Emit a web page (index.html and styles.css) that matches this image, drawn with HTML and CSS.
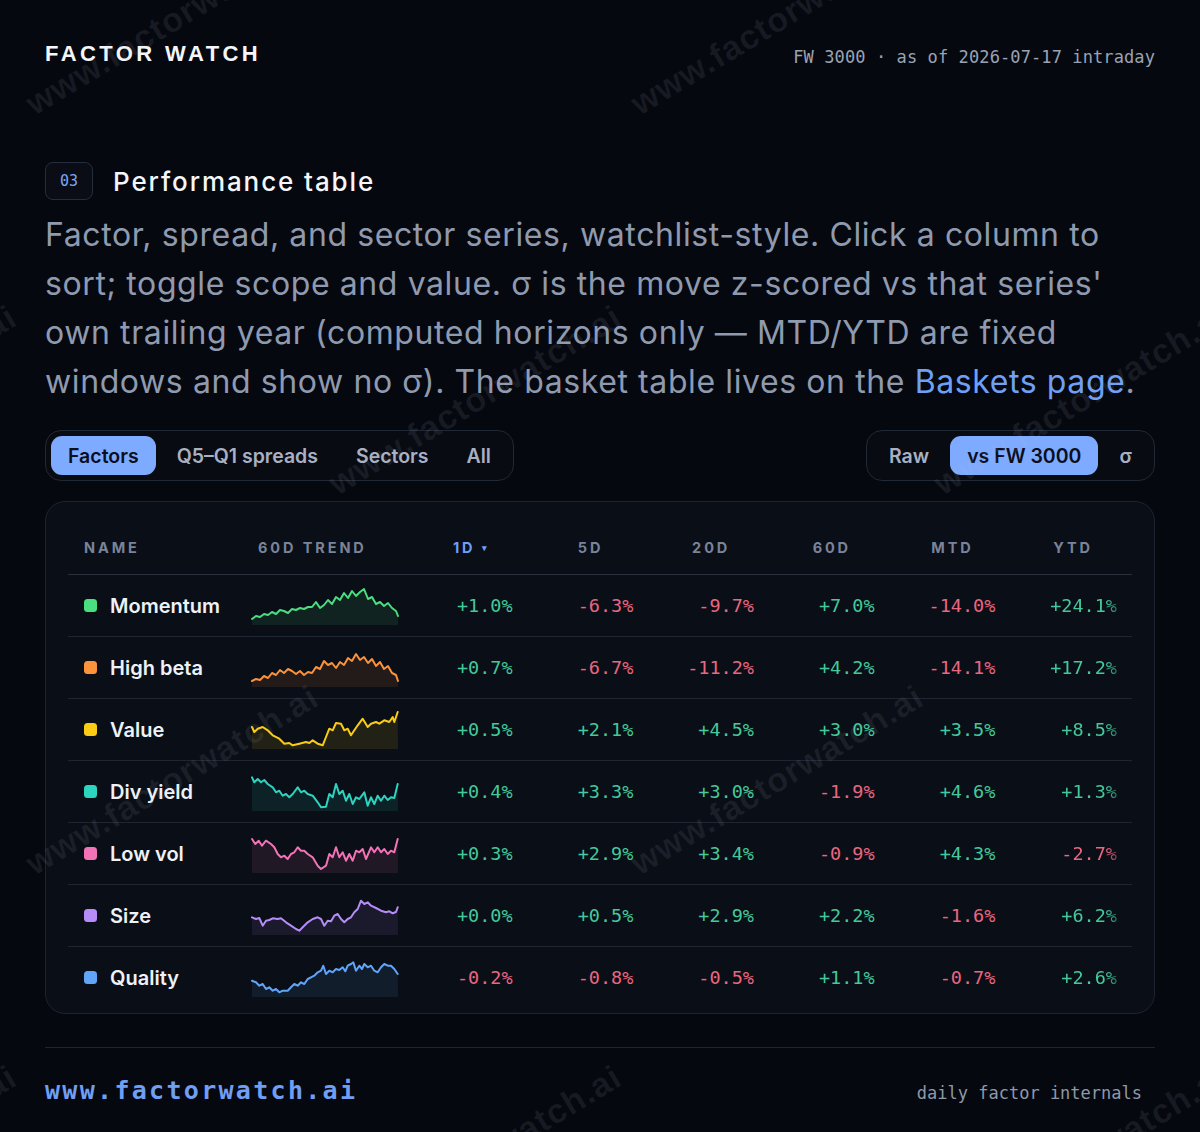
FILE: index.html
```html
<!DOCTYPE html>
<html lang="en">
<head>
<meta charset="utf-8">
<title>Factor Watch — Performance table</title>
<link rel="stylesheet" href="styles.css">
</head>
<body>
<div class="page">
  <header class="topbar">
    <div class="brand">FACTOR WATCH</div>
    <div class="asof">FW 3000 · as of 2026-07-17 intraday</div>
  </header>

  <section class="section">
    <div class="section-head">
      <span class="badge">03</span>
      <h2 class="title">Performance table</h2>
    </div>
    <p class="lede">Factor, spread, and sector series, watchlist-style. Click a column to sort; toggle scope and value. σ is the move z-scored vs that series' own trailing year (computed horizons only — MTD/YTD are fixed windows and show no σ). The basket table lives on the <a class="link" href="#">Baskets page</a>.</p>

    <div class="controls">
      <div class="seg">
        <button class="tab active">Factors</button>
        <button class="tab">Q5–Q1 spreads</button>
        <button class="tab">Sectors</button>
        <button class="tab">All</button>
      </div>
      <div class="seg">
        <button class="tab">Raw</button>
        <button class="tab active">vs FW 3000</button>
        <button class="tab">σ</button>
      </div>
    </div>

    <div class="card">
      <div class="row head">
        <div class="th th-name">NAME</div>
        <div class="th th-name">60D TREND</div>
        <div class="th num sorted">1D <span class="caret">▾</span></div>
        <div class="th num">5D</div>
        <div class="th num">20D</div>
        <div class="th num">60D</div>
        <div class="th num">MTD</div>
        <div class="th num">YTD</div>
      </div>

      <div class="row">
        <div class="name"><span class="dot c-mom"></span>Momentum</div>
        <div class="trend">
          <svg class="spark c-mom" viewBox="0 0 146 38" width="146" height="38">
            <polygon class="area" points="0,32 4,29 8,30 12,27 16,28 20,25 24,27 28,23 32,24 36,26 40,22 44,23 48,21 52,22 56,20 60,20 64,15 68,21 72,18 76,13 80,17 84,10 88,13 92,6 96,11 100,4 104,9 108,5 112,2 116,12 120,10 124,17 128,15 132,19 136,16 140,21 144,24 146,29 146,38 0,38"/>
            <polyline class="line" points="0,32 4,29 8,30 12,27 16,28 20,25 24,27 28,23 32,24 36,26 40,22 44,23 48,21 52,22 56,20 60,20 64,15 68,21 72,18 76,13 80,17 84,10 88,13 92,6 96,11 100,4 104,9 108,5 112,2 116,12 120,10 124,17 128,15 132,19 136,16 140,21 144,24 146,29"/>
          </svg>
        </div>
        <div class="val up">+1.0%</div>
        <div class="val dn">-6.3%</div>
        <div class="val dn">-9.7%</div>
        <div class="val up">+7.0%</div>
        <div class="val dn">-14.0%</div>
        <div class="val up fade">+24.1%</div>
      </div>

      <div class="row">
        <div class="name"><span class="dot c-beta"></span>High beta</div>
        <div class="trend">
          <svg class="spark c-beta" viewBox="0 0 146 38" width="146" height="38">
            <polygon class="area" points="0,32 4,30 8,31 12,27 16,29 20,24 24,26 28,21 32,24 36,20 40,22 44,25 48,22 52,26 56,23 60,24 64,18 68,20 72,12 76,16 80,14 84,19 88,13 92,16 96,9 100,12 104,5 108,11 112,8 116,14 120,10 124,17 128,13 132,20 136,17 140,24 144,26 146,32 146,38 0,38"/>
            <polyline class="line" points="0,32 4,30 8,31 12,27 16,29 20,24 24,26 28,21 32,24 36,20 40,22 44,25 48,22 52,26 56,23 60,24 64,18 68,20 72,12 76,16 80,14 84,19 88,13 92,16 96,9 100,12 104,5 108,11 112,8 116,14 120,10 124,17 128,13 132,20 136,17 140,24 144,26 146,32"/>
          </svg>
        </div>
        <div class="val up">+0.7%</div>
        <div class="val dn">-6.7%</div>
        <div class="val dn">-11.2%</div>
        <div class="val up">+4.2%</div>
        <div class="val dn">-14.1%</div>
        <div class="val up fade">+17.2%</div>
      </div>

      <div class="row">
        <div class="name"><span class="dot c-val"></span>Value</div>
        <div class="trend">
          <svg class="spark c-val" viewBox="0 0 146 38" width="146" height="38">
            <polygon class="area" points="0,16 2.3,21 5.7,17.7 10.7,16 15.7,19.3 20.7,24.3 27.3,27.7 32.3,32.7 37.3,32 40.7,34.3 47.3,32.7 54,31 57.3,32 60.7,29.3 65.7,32.7 70.7,34.3 74,26 77.3,17.7 80.7,19.3 84,12 89,12.7 92.3,19.3 95.7,17.7 99,24.3 102.3,19.3 105.7,14.3 110.7,7.7 115.7,16 119,12.7 124,11 127.3,12.7 132.3,9.3 137.3,11 140.7,6 142.3,11 145.7,1 146,38 0,38"/>
            <polyline class="line" points="0,16 2.3,21 5.7,17.7 10.7,16 15.7,19.3 20.7,24.3 27.3,27.7 32.3,32.7 37.3,32 40.7,34.3 47.3,32.7 54,31 57.3,32 60.7,29.3 65.7,32.7 70.7,34.3 74,26 77.3,17.7 80.7,19.3 84,12 89,12.7 92.3,19.3 95.7,17.7 99,24.3 102.3,19.3 105.7,14.3 110.7,7.7 115.7,16 119,12.7 124,11 127.3,12.7 132.3,9.3 137.3,11 140.7,6 142.3,11 145.7,1"/>
          </svg>
        </div>
        <div class="val up">+0.5%</div>
        <div class="val up">+2.1%</div>
        <div class="val up">+4.5%</div>
        <div class="val up">+3.0%</div>
        <div class="val up">+3.5%</div>
        <div class="val up fade">+8.5%</div>
      </div>

      <div class="row">
        <div class="name"><span class="dot c-div"></span>Div yield</div>
        <div class="trend">
          <svg class="spark c-div" viewBox="0 0 146 38" width="146" height="38">
            <polygon class="area" points="0,4.3 2.3,9.3 5.7,6 9,9.3 12.3,7 15.7,11 20.7,14.3 24,19.3 27.3,17.7 30.7,22.7 34,21 37.3,24.3 40.7,21 45.7,14.3 49,19.3 52.3,17.7 55.7,21 60.7,22.7 65.7,29.3 69,34.3 74,33.7 77.3,21 80.7,24.3 84,11 87.3,21 90.7,17.7 94,27.7 97.3,21 100.7,31 104,24.3 107.3,26 112.3,19.3 115.7,32.7 119,24.3 122.3,31 125.7,22.7 129,27.7 132.3,22.7 135.7,27 139,24.3 142.3,25 145.7,11 146,38 0,38"/>
            <polyline class="line" points="0,4.3 2.3,9.3 5.7,6 9,9.3 12.3,7 15.7,11 20.7,14.3 24,19.3 27.3,17.7 30.7,22.7 34,21 37.3,24.3 40.7,21 45.7,14.3 49,19.3 52.3,17.7 55.7,21 60.7,22.7 65.7,29.3 69,34.3 74,33.7 77.3,21 80.7,24.3 84,11 87.3,21 90.7,17.7 94,27.7 97.3,21 100.7,31 104,24.3 107.3,26 112.3,19.3 115.7,32.7 119,24.3 122.3,31 125.7,22.7 129,27.7 132.3,22.7 135.7,27 139,24.3 142.3,25 145.7,11"/>
          </svg>
        </div>
        <div class="val up">+0.4%</div>
        <div class="val up">+3.3%</div>
        <div class="val up">+3.0%</div>
        <div class="val dn">-1.9%</div>
        <div class="val up">+4.6%</div>
        <div class="val up fade">+1.3%</div>
      </div>

      <div class="row">
        <div class="name"><span class="dot c-low"></span>Low vol</div>
        <div class="trend">
          <svg class="spark c-low" viewBox="0 0 146 38" width="146" height="38">
            <polygon class="area" points="0,4 3.3,9 6.7,5.7 10,10.7 14,5.7 19,9 22.3,12.3 25.7,19 29,22.3 32.3,20.7 35.7,24 39,19 42.3,17.3 45.7,12.3 49,15.7 52.3,15.7 55.7,19 60.7,22.3 65.7,30.7 69,34 74,30.7 77.3,19 80.7,22.3 84,12.3 87.3,22.3 90.7,17.3 94,25.7 97.3,19 100.7,25.7 104,15.7 107.3,17.3 110.7,14 114,24 119,12.3 122.3,17.3 125.7,12.3 129,17.3 132.3,14 135.7,19 139,15.7 142.3,17.3 145.7,4 146,38 0,38"/>
            <polyline class="line" points="0,4 3.3,9 6.7,5.7 10,10.7 14,5.7 19,9 22.3,12.3 25.7,19 29,22.3 32.3,20.7 35.7,24 39,19 42.3,17.3 45.7,12.3 49,15.7 52.3,15.7 55.7,19 60.7,22.3 65.7,30.7 69,34 74,30.7 77.3,19 80.7,22.3 84,12.3 87.3,22.3 90.7,17.3 94,25.7 97.3,19 100.7,25.7 104,15.7 107.3,17.3 110.7,14 114,24 119,12.3 122.3,17.3 125.7,12.3 129,17.3 132.3,14 135.7,19 139,15.7 142.3,17.3 145.7,4"/>
          </svg>
        </div>
        <div class="val up">+0.3%</div>
        <div class="val up">+2.9%</div>
        <div class="val up">+3.4%</div>
        <div class="val dn">-0.9%</div>
        <div class="val up">+4.3%</div>
        <div class="val dn fade">-2.7%</div>
      </div>

      <div class="row">
        <div class="name"><span class="dot c-size"></span>Size</div>
        <div class="trend">
          <svg class="spark c-size" viewBox="0 0 146 38" width="146" height="38">
            <polygon class="area" points="0,20.3 4,22 7.3,21 10.7,28.7 14,23.7 17.3,23 20.7,21.3 25.7,22 29,21.3 34,25.3 39,28.7 44,32 47.3,33.7 50.7,30.3 55.7,25.3 60.7,22 65.7,20.3 69,22 72.3,28.7 75.7,23.7 79,24.3 82.3,18.7 85.7,17 89,22 92.3,25.3 95.7,22 99,20.3 102.3,15.3 105.7,12 109,3.7 112.3,7 115.7,5.3 119,8.7 124,11 129,13.7 134,15.3 137.3,14.3 140.7,16.3 144,15 145.7,10.3 146,38 0,38"/>
            <polyline class="line" points="0,20.3 4,22 7.3,21 10.7,28.7 14,23.7 17.3,23 20.7,21.3 25.7,22 29,21.3 34,25.3 39,28.7 44,32 47.3,33.7 50.7,30.3 55.7,25.3 60.7,22 65.7,20.3 69,22 72.3,28.7 75.7,23.7 79,24.3 82.3,18.7 85.7,17 89,22 92.3,25.3 95.7,22 99,20.3 102.3,15.3 105.7,12 109,3.7 112.3,7 115.7,5.3 119,8.7 124,11 129,13.7 134,15.3 137.3,14.3 140.7,16.3 144,15 145.7,10.3"/>
          </svg>
        </div>
        <div class="val up">+0.0%</div>
        <div class="val up">+0.5%</div>
        <div class="val up">+2.9%</div>
        <div class="val up">+2.2%</div>
        <div class="val dn">-1.6%</div>
        <div class="val up fade">+6.2%</div>
      </div>

      <div class="row last">
        <div class="name"><span class="dot c-qual"></span>Quality</div>
        <div class="trend">
          <svg class="spark c-qual" viewBox="0 0 146 38" width="146" height="38">
            <polygon class="area" points="0,21.7 4,23.3 7.3,26.7 10.7,25 14,30 17.3,28.3 20.7,31.7 24,30 27.3,33.3 30.7,31.7 35.7,31.7 39,28.3 42.3,25 45.7,26.7 49,23.3 52.3,25 55.7,20 59,18.3 62.3,16.7 65.7,13.3 69,11.7 71.3,6.7 74,15 77.3,11.7 80.7,13.3 84,10 87.3,11 90.7,8.3 93.3,12.3 95.7,6.7 99,5 101.3,3.3 104,11.7 107.3,6.7 110,10 112.3,5 115.7,8.3 119,6.7 122.3,11.7 125.7,13.3 129,8.3 132.3,5 135.7,6.7 139,6.7 142.3,10 145.7,15 146,38 0,38"/>
            <polyline class="line" points="0,21.7 4,23.3 7.3,26.7 10.7,25 14,30 17.3,28.3 20.7,31.7 24,30 27.3,33.3 30.7,31.7 35.7,31.7 39,28.3 42.3,25 45.7,26.7 49,23.3 52.3,25 55.7,20 59,18.3 62.3,16.7 65.7,13.3 69,11.7 71.3,6.7 74,15 77.3,11.7 80.7,13.3 84,10 87.3,11 90.7,8.3 93.3,12.3 95.7,6.7 99,5 101.3,3.3 104,11.7 107.3,6.7 110,10 112.3,5 115.7,8.3 119,6.7 122.3,11.7 125.7,13.3 129,8.3 132.3,5 135.7,6.7 139,6.7 142.3,10 145.7,15"/>
          </svg>
        </div>
        <div class="val dn">-0.2%</div>
        <div class="val dn">-0.8%</div>
        <div class="val dn">-0.5%</div>
        <div class="val up">+1.1%</div>
        <div class="val dn">-0.7%</div>
        <div class="val up fade">+2.6%</div>
      </div>
    </div>
  </section>

  <footer class="footer">
    <div class="site">www.factorwatch.ai</div>
    <div class="tagline">daily factor internals</div>
  </footer>
</div>

<div class="watermarks" aria-hidden="true">
  <span class="wm" style="left:172px;top:20px">www.factorwatch.ai</span>
  <span class="wm" style="left:777px;top:20px">www.factorwatch.ai</span>
  <span class="wm" style="left:-130px;top:400px">www.factorwatch.ai</span>
  <span class="wm" style="left:475px;top:400px">www.factorwatch.ai</span>
  <span class="wm" style="left:1080px;top:400px">www.factorwatch.ai</span>
  <span class="wm" style="left:172px;top:780px">www.factorwatch.ai</span>
  <span class="wm" style="left:777px;top:780px">www.factorwatch.ai</span>
  <span class="wm" style="left:-130px;top:1160px">www.factorwatch.ai</span>
  <span class="wm" style="left:475px;top:1160px">www.factorwatch.ai</span>
  <span class="wm" style="left:1080px;top:1160px">www.factorwatch.ai</span>
</div>
</body>
</html>
```

FILE: styles.css
```css
* { box-sizing: border-box; }

html, body {
  margin: 0;
  padding: 0;
}

body {
  background: #06080f;
  color: #e8ecf3;
  font-family: Inter, "Noto Sans", "Liberation Sans", sans-serif;
  width: 1200px;
  height: 1132px;
  overflow: hidden;
  position: relative;
}

.page {
  padding: 39px 45px 0;
}

/* top bar */
.topbar {
  display: flex;
  justify-content: space-between;
  align-items: baseline;
  height: 30px;
}

.brand {
  font-family: "Liberation Sans", Arial, sans-serif;
  font-weight: 700;
  font-size: 22px;
  letter-spacing: 0.155em;
  color: #f4f6fa;
  line-height: 30px;
}

.asof {
  font-family: "DejaVu Sans Mono", "Liberation Mono", monospace;
  font-size: 17px;
  letter-spacing: 0.1px;
  color: #9aa3b4;
  line-height: 30px;
  position: relative;
  top: 2px;
}

/* section */
.section-head {
  margin-top: 93px;
  display: flex;
  align-items: center;
  gap: 20px;
  height: 38px;
}

.badge {
  width: 48px;
  height: 38px;
  border: 1px solid #262d3b;
  border-radius: 8px;
  background: #0a0d15;
  display: flex;
  align-items: center;
  justify-content: center;
  font-family: "DejaVu Sans Mono", monospace;
  font-size: 15px;
  color: #7ea6f6;
}

.title {
  margin: 0;
  font-size: 26px;
  font-weight: 500;
  letter-spacing: 1.9px;
  color: #f4f6fa;
}

.lede {
  margin: 10px 0 0;
  font-size: 32px;
  line-height: 49px;
  letter-spacing: 0.6px;
  color: #8f9aaf;
  font-weight: 400;
}

.link {
  color: #6fa0f6;
  text-decoration: none;
}

/* controls */
.controls {
  margin-top: 24px;
  display: flex;
  justify-content: space-between;
}

.seg {
  display: flex;
  gap: 4px;
  padding: 5px;
  border: 1px solid #212836;
  border-radius: 16px;
  background: #080b12;
}

.tab {
  font-family: Inter, "Noto Sans", sans-serif;
  font-size: 19.5px;
  font-weight: 600;
  color: #a8b0c1;
  background: transparent;
  border: 0;
  height: 39px;
  padding: 0 17px;
  border-radius: 11px;
  cursor: pointer;
}

.tab.active {
  background: #7eaaff;
  color: #0a0f1c;
}

/* card */
.card {
  margin-top: 20px;
  border: 1px solid #1d2330;
  border-radius: 20px;
  background: #0a0e16;
  padding: 19px 22px 5px;
}

.row {
  display: grid;
  grid-template-columns: 174px 166px repeat(6, 1fr);
  align-items: center;
  height: 62px;
  border-bottom: 1px solid #1f2531;
}

.row.head {
  height: 54px;
  border-bottom-color: #2a303c;
}

.row.last {
  border-bottom: 0;
  height: 61px;
}

.th {
  font-size: 14.5px;
  font-weight: 700;
  letter-spacing: 0.2em;
  color: #79839a;
}

.th-name {
  padding-left: 16px;
}

.th.num {
  text-align: center;
  padding-left: 3px;
}

.th.sorted {
  color: #6f9ef5;
}

.caret {
  font-size: 9px;
  letter-spacing: 0;
  vertical-align: 2px;
}

.name {
  display: flex;
  align-items: center;
  gap: 13px;
  padding-left: 16px;
  font-size: 20px;
  font-weight: 600;
  color: #eef1f6;
}

.dot {
  width: 13px;
  height: 13px;
  border-radius: 3.5px;
  background: currentColor;
  flex: none;
}

.trend {
  padding-left: 10px;
  display: flex;
  align-items: center;
}

.spark {
  display: block;
  overflow: visible;
}

.spark .line {
  fill: none;
  stroke: currentColor;
  stroke-width: 2;
  stroke-linejoin: round;
  stroke-linecap: round;
}

.spark .area {
  fill: currentColor;
  fill-opacity: 0.1;
  stroke: none;
}

.c-mom { color: #4ade80; }
.c-beta { color: #fb923c; }
.c-val { color: #facc15; }
.c-div { color: #2dd4bf; }
.c-low { color: #f472b6; }
.c-size { color: #b58cf8; }
.c-qual { color: #60a5fa; }

.val {
  text-align: right;
  padding-right: 16px;
  font-family: "DejaVu Sans Mono", "Liberation Mono", monospace;
  font-size: 18.5px;
}

.val.up { color: #43c99b; }
.val.dn { color: #ea6681; }

.val.fade {
  padding-right: 15px;
  -webkit-mask-image: linear-gradient(90deg, #000 0%, #000 78%, rgba(0,0,0,0.4) 90%, rgba(0,0,0,0.4) 100%);
  mask-image: linear-gradient(90deg, #000 0%, #000 78%, rgba(0,0,0,0.4) 90%, rgba(0,0,0,0.4) 100%);
}

/* footer */
.footer {
  margin-top: 33px;
  border-top: 1px solid #1e2430;
  display: flex;
  justify-content: space-between;
  align-items: baseline;
  padding: 28px 13px 0 0;
}

.site {
  font-family: "DejaVu Sans Mono", monospace;
  font-weight: 700;
  font-size: 25px;
  letter-spacing: 2.3px;
  color: #6f9ef5;
}

.tagline {
  font-family: "DejaVu Sans Mono", monospace;
  font-size: 17px;
  color: #8f98a9;
}

/* watermark overlay */
.watermarks {
  position: absolute;
  inset: 0;
  pointer-events: none;
  overflow: hidden;
}

.wm {
  position: absolute;
  transform: translate(-50%, -50%) rotate(-31deg);
  font-family: "Liberation Sans", Arial, sans-serif;
  font-weight: 700;
  font-size: 34px;
  letter-spacing: 1px;
  color: rgba(190, 200, 220, 0.09);
  white-space: nowrap;
}
```
